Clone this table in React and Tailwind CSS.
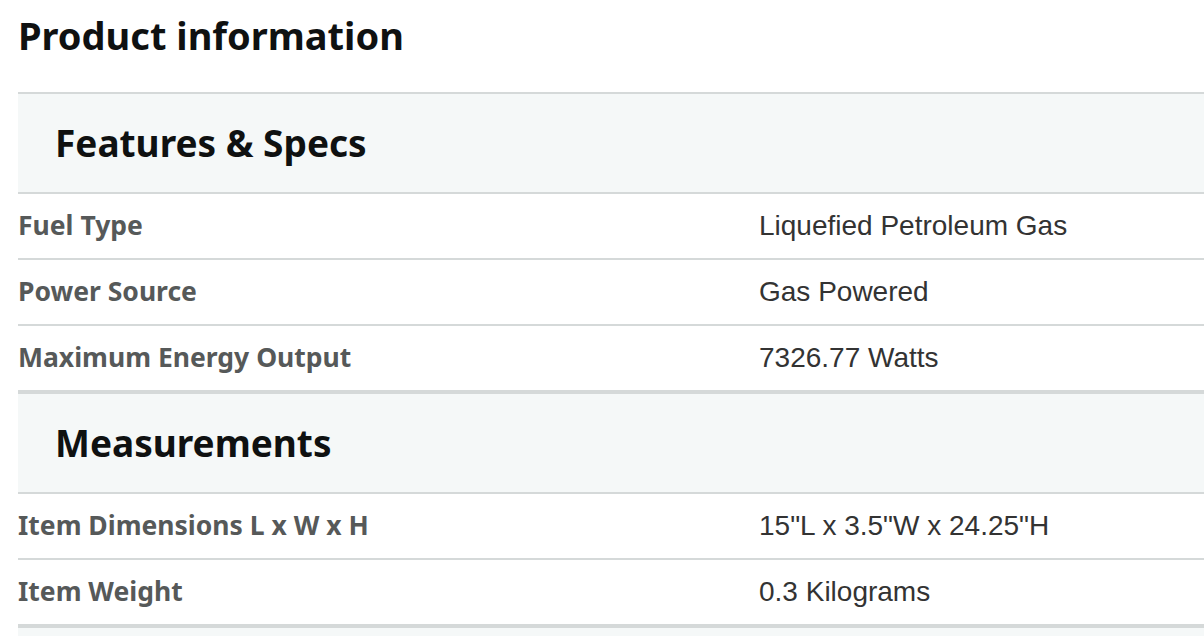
import React from 'react';

const sections = [
    {
        title: 'Features & Specs',
        rows: [
            ['Fuel Type', 'Liquefied Petroleum Gas'],
            ['Power Source', 'Gas Powered'],
            ['Maximum Energy Output', '7326.77 Watts'],
        ],
    },
    {
        title: 'Measurements',
        rows: [
            ['Item Dimensions L x W x H', '15"L x 3.5"W x 24.25"H'],
            ['Item Weight', '0.3 Kilograms'],
        ],
    },
    { title: '', rows: [] },
];

const SectionHeader = ({ title }) => (
    <div className="h-[102px] flex items-center pl-[37px] bg-[#f5f8f8] border-y-2 border-[#d5d9d9]">
        <h3 className="font-['Noto_Sans',sans-serif] font-bold text-[37px] leading-[48px] text-[#0f1111]">
            {title}
        </h3>
    </div>
);

const Row = ({ label, value }) => (
    <div className="h-[66px] grid grid-cols-[741px_1fr] items-center border-b-2 border-[#d5d9d9]">
        <span className="font-['Noto_Sans',sans-serif] font-bold text-[26.5px] text-[#565959]">{label}</span>
        <span className="font-['Liberation_Sans',Arial,sans-serif] text-[28px] text-[#333333]">{value}</span>
    </div>
);

export default function App() {
    return (
        <div className="h-screen bg-white pl-[18px] overflow-hidden">
            <h2 className="pt-[11px] mb-[33px] font-['Noto_Sans',sans-serif] font-bold text-[38px] leading-[48px] text-[#0f1111]">
                Product information
            </h2>

            <div className="w-[1300px]">
                {sections.map((section, i) => (
                    <div key={i}>
                        <SectionHeader title={section.title} />
                        {section.rows.map(([label, value]) => (
                            <Row key={label} label={label} value={value} />
                        ))}
                    </div>
                ))}
            </div>
        </div>
    );
}
